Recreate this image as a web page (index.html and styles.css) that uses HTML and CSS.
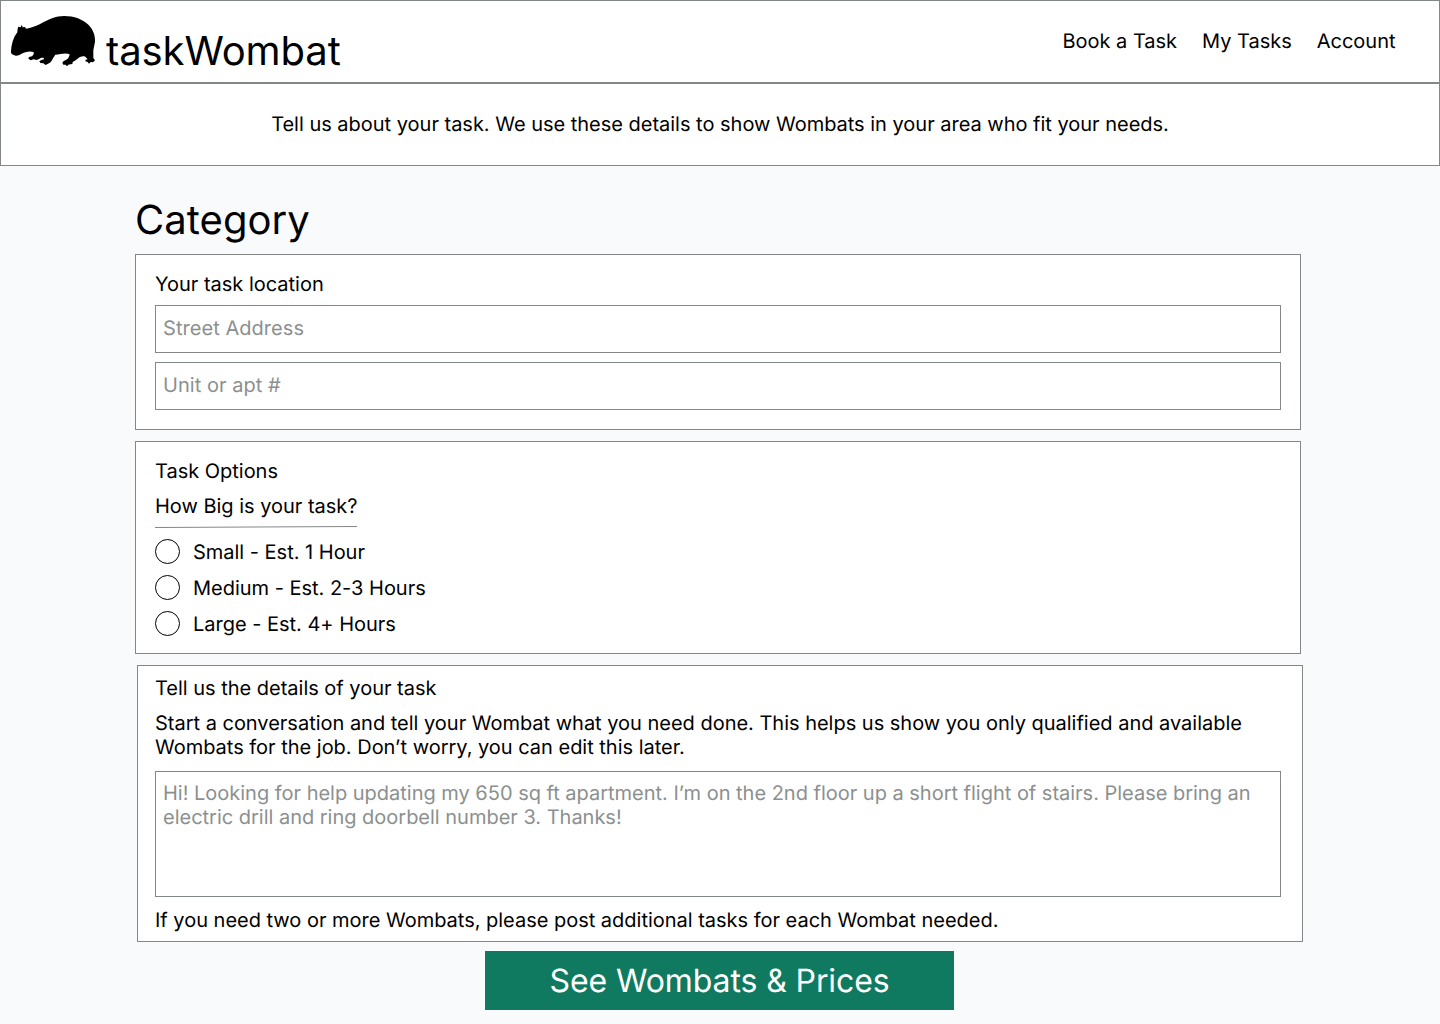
FILE: index.html
```html
<!DOCTYPE html>
<html lang="en">
<head>
<meta charset="utf-8">
<title>taskWombat</title>
<link rel="stylesheet" href="styles.css">
</head>
<body>
<header class="site-header">
  <a class="brand" href="#">
    <svg class="brand-mark" viewBox="30 45 258 156" aria-hidden="true">
      <path d="M53 86L55 80L62 82L65 74L68 82L75 81L78 86C92 85 105 79 119 73C145 58 168 48 192 48C222 48 249 58 266 75C280 90 286 107 285 125L280 151L280 174L285 181L279 187L272 186L267 191L263 186L256 184L257 179L263 178L256 170C248 167 239 170 232 177C227 182 219 184 218 187L217 192L211 193L205 194L201 199L197 194L190 194L187 189L191 183L198 180C204 177 208 171 209 163C195 157 181 164 166 164L159 175C154 185 151 190 144 191L137 195L130 190L121 189L118 184L124 180L132 178L131 173L124 173L117 177L110 180L101 178L92 181L85 176L87 171L96 169L101 163L101 156C91 153 84 154 77 157C66 158 60 168 47 167C38 165 32 162 33 154C34 132 40 112 52 97Z"/>
    </svg>
    <span class="brand-name">taskWombat</span>
  </a>
  <nav class="nav">
    <a href="#">Book a Task</a>
    <a href="#">My Tasks</a>
    <a href="#">Account</a>
  </nav>
</header>
<div class="banner">Tell us about your task. We use these details to show Wombats in your area who fit your needs.</div>
<main class="page">
  <h1 class="title">Category</h1>
  <section class="card location">
    <h2 class="label">Your task location</h2>
    <input class="field" type="text" placeholder="Street Address">
    <input class="field" type="text" placeholder="Unit or apt #">
  </section>
  <section class="card options">
    <h2 class="label">Task Options</h2>
    <p class="question">How Big is your task?</p>
    <svg class="rule" viewBox="0 0 202 2" aria-hidden="true"><path d="M0 1.5L202 .5"/></svg>
    <div class="choices">
      <label class="choice"><input class="radio" type="radio" name="size"><span>Small - Est. 1 Hour</span></label>
      <label class="choice"><input class="radio" type="radio" name="size"><span>Medium - Est. 2-3 Hours</span></label>
      <label class="choice"><input class="radio" type="radio" name="size"><span>Large - Est. 4+ Hours</span></label>
    </div>
  </section>
  <section class="card details">
    <h2 class="label">Tell us the details of your task</h2>
    <p class="intro">Start a conversation and tell your Wombat what you need done. This helps us show you only qualified and available Wombats for the job. Don’t worry, you can edit this later.</p>
    <textarea class="message" placeholder="Hi! Looking for help updating my 650 sq ft apartment. I’m on the 2nd floor up a short flight of stairs. Please bring an electric drill and ring doorbell number 3. Thanks!"></textarea>
    <p class="note">If you need two or more Wombats, please post additional tasks for each Wombat needed.</p>
  </section>
  <button class="submit" type="button">See Wombats &amp; Prices</button>
</main>
</body>
</html>
```
FILE: styles.css
```css
* { box-sizing: border-box; margin: 0; padding: 0; }
body {
  background: #f9fafc;
  color: #000;
  font: 400 20px/24px Inter, sans-serif;
  letter-spacing: -0.013px;
  text-rendering: geometricPrecision;
}
a { color: inherit; text-decoration: none; }
h1, h2 { font-weight: inherit; }
input, textarea, button { font: inherit; letter-spacing: inherit; color: inherit; border-radius: 0; text-rendering: inherit; }

.site-header, .banner {
  height: 83px;
  background: #fff;
  border: 1px solid #838887;
}
.site-header {
  display: flex;
  justify-content: space-between;
  align-items: flex-start;
  padding: 0 43.5px 0 9px;
}
.brand { display: flex; align-items: flex-start; gap: 10px; }
.brand-mark { width: 86px; height: 52px; margin-top: 14px; }
.brand-name { margin-top: 26px; font-size: 40px; line-height: 48px; letter-spacing: -0.1px; }
.nav { display: flex; gap: 25px; padding-top: 28px; }
.banner { padding-top: 28px; text-align: center; }

.page {
  display: flex;
  flex-direction: column;
  width: 1166px;
  margin-left: 135px;
  padding-top: 30px;
}
.title { font-size: 40px; line-height: 48px; margin-bottom: 10px; letter-spacing: 0.06px; }
.card {
  display: flex;
  flex-direction: column;
  background: #fff;
  border: 1px solid #838887;
  padding: 17px 19px 0;
  margin-bottom: 11px;
}
.label { font-size: 20px; }

.location { height: 176px; gap: 9px; }
.field {
  height: 48px;
  flex: none;
  border: 1px solid #838887;
  background: #fff;
  padding: 0 7px 2px;
  letter-spacing: 0.05px;
}
.field::placeholder, .message::placeholder { color: #8b908f; opacity: 1; }

.options { height: 213px; }
.question { margin-top: 11px; }
.rule { width: 202px; height: 2px; margin-top: 8px; fill: none; stroke: #838887; }
.choices { display: flex; flex-direction: column; gap: 11px; margin-top: 11px; }
.choice { display: flex; align-items: flex-end; gap: 13px; height: 25px; }
.radio {
  appearance: none;
  width: 25px;
  height: 25px;
  border: 1px solid #000;
  border-radius: 50%;
}

.details {
  width: 1166px;
  height: 277px;
  margin-left: 2px;
  margin-bottom: 9px;
  padding: 10px 21px 0 17px;
}
.intro { margin-top: 11px; }
.message {
  height: 126px;
  margin-top: 12px;
  border: 1px solid #838887;
  background: #fff;
  padding: 9px 7px;
  resize: none;
}
.note { margin-top: 11px; }
.submit {
  width: 469px;
  height: 59px;
  margin-left: 350px;
  border: 0;
  background: #0f7a60;
  color: #fff;
  font-size: 32px;
  line-height: 39px;
  letter-spacing: -0.1px;
}
```
